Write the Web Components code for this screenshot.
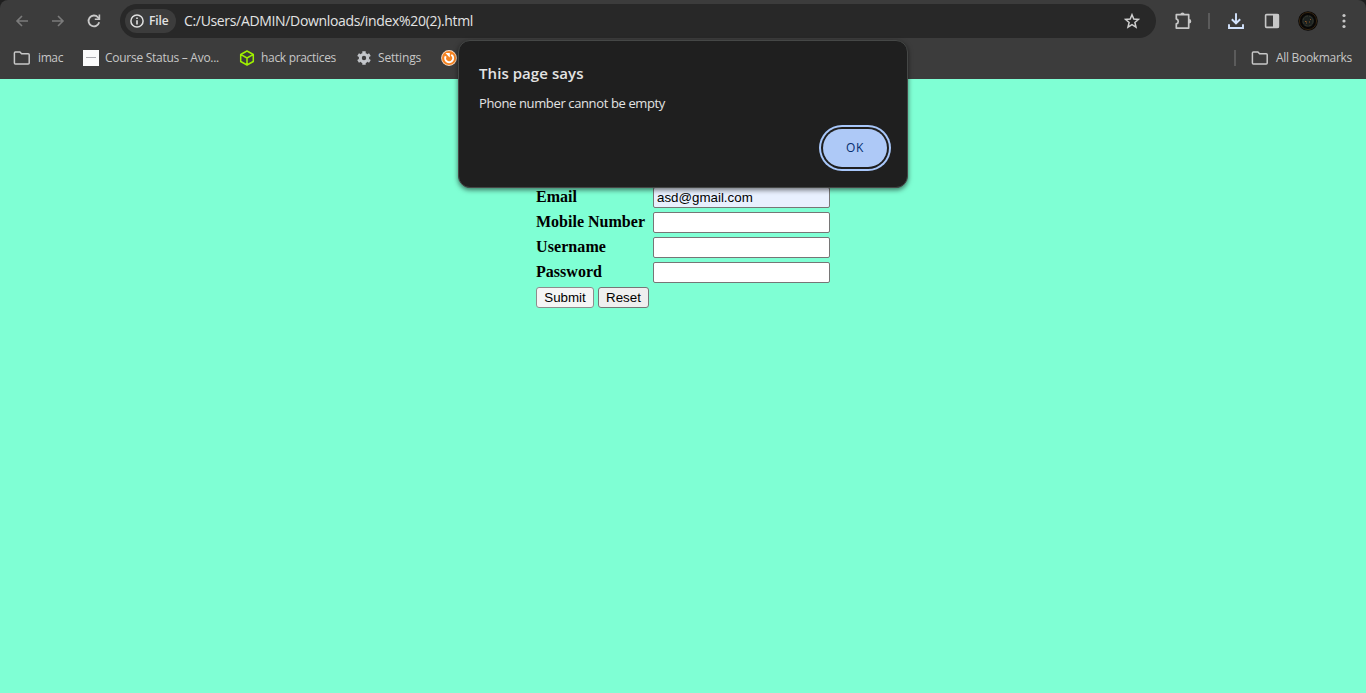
<!DOCTYPE html>
<html lang="en">
<head>
<meta charset="utf-8">
<title>Registration</title>
<style>
html,body{margin:0;height:100%;overflow:hidden;background:#7fffd4}
</style>
</head>
<body>
<browser-window></browser-window>
<script>
const define = (name, html, ready) => {
  const t = document.createElement('template');
  t.innerHTML = html;
  customElements.define(name, class extends HTMLElement {
    connectedCallback() {
      if (this.shadowRoot) return;
      this.attachShadow({ mode: 'open' }).appendChild(t.content.cloneNode(true));
      if (ready) ready(this, this.shadowRoot);
    }
  });
};

// A single line of text tracked so that it fills the width given in "w".
define('fit-text', `<style>:host{display:block;white-space:nowrap;flex:none}span{display:inline-block}</style><span><slot></slot></span>`, (el, root) => {
  const s = root.querySelector('span'), w = +el.getAttribute('w');
  el.style.width = w + 'px';
  s.style.letterSpacing = ((w - s.getBoundingClientRect().width) / el.textContent.length) + 'px';
});

const icons = {
  back: ['0 0 16 16', '<path d="M14 8H3M8 3 3 8l5 5" stroke="#7b7b7b" stroke-width="1.6"/>'],
  forward: ['0 0 16 16', '<path d="M2 8h11M8 3l5 5-5 5" stroke="#7b7b7b" stroke-width="1.6"/>'],
  reload: ['0 0 16 16', '<path d="M13.200 9.300A5.400 5.400 0 1 1 12 4.300L13.500 6" stroke="#c9c9c9" stroke-width="1.8"/><path d="M14.200 1.600v5.400H8.800V5.500h3.800V1.600z" fill="#c9c9c9"/>'],
  info: ['0 0 16 16', '<circle cx="8" cy="8" r="6.100" stroke="#e0e0e0" stroke-width="1.500"/><path d="M8 7.200v4.200M8 4.500v1.600" stroke="#e0e0e0" stroke-width="1.600"/>'],
  star: ['0 0 16 16', '<path d="M8 1.700 9.800 6l4.700.4-3.600 3.100 1.100 4.600L8 11.700l-4 2.400 1.100-4.600-3.600-3.100L6.200 6z" stroke="#cfcfcf" stroke-width="1.500"/>'],
  puzzle: ['0 0 18 18', '<path d="M2.300 2.700h12.400v13.400H2.300v-4.200c2.600-.8 2.600-4.200 0-5z" stroke="#c7c7c7" stroke-width="1.700" stroke-linejoin="round"/><path d="M6.400 2.500a2.100 2.100 0 0 1 4.200 0zM15 7a2.300 2.300 0 0 1 0 4.600z" fill="#c7c7c7"/>'],
  download: ['0 0 16 16', '<path d="M8 .3v9.700M3.800 6.200 8 10.300l4.200-4.100M1 11.300V15h14v-3.700" stroke="#d3e3fd" stroke-width="1.900"/>'],
  panel: ['0 0 16 16', '<rect x="1.600" y="1.600" width="12.800" height="12.800" rx="1" stroke="#c7c7c7" stroke-width="1.600"/><path d="M9 1h5.600v14H9z" fill="#c7c7c7"/>'],
  avatar: ['0 0 20 20', '<circle cx="10" cy="10" r="9.800" fill="#080706"/><circle cx="10" cy="10" r="8.600" stroke="#33230f"/><circle cx="10" cy="10" r="6" fill="#1c211f"/><circle cx="10" cy="10" r="5" stroke="#35382f" stroke-dasharray="3 1"/><path d="M7 10.500h1.500M8 12h1m3-3.500h1M11 11h1" stroke="#8a5524"/>'],
  dots: ['0 0 16 16', '<g fill="#c7c7c7"><circle cx="8" cy="2.500" r="1.600"/><circle cx="8" cy="8" r="1.600"/><circle cx="8" cy="13.500" r="1.600"/></g>'],
  folder: ['0 0 18 16', '<path d="M1.400 3q0-1 1-1h4.500l1.700 1.800h6.600q1 0 1 1V13q0 1-1 1H2.400q-1 0-1-1z" stroke="#c7c7c7" stroke-width="1.500"/>'],
  course: ['0 0 16 16', '<path d="M0 0h16v16H0z" fill="#fafafa"/><path d="M3 7.500h10" stroke="#a9a9ae"/>'],
  cube: ['0 0 16 16', '<path d="M8 1 14.300 4.500v7L8 15l-6.300-3.500v-7zM2 4.700 8 8l6-3.300M8 8v7" stroke="#9fef00" stroke-width="1.500" stroke-linejoin="round"/>'],
  gear: ['0 0 16 16', '<circle cx="8" cy="8" r="3.700" stroke="#c3c6ca" stroke-width="3"/><g stroke="#c3c6ca" stroke-width="3.400"><path d="M8 1.200v2M8 12.800v2M2.100 4.600l1.700 1M12.200 10.400l1.700 1M2.100 11.400l1.700-1M12.200 5.600l1.700-1"/></g>'],
  orange: ['0 0 16 16', '<circle cx="8" cy="8" r="7.900" fill="#f8dcc4"/><circle cx="8" cy="8" r="7" fill="#f58220"/><path d="M10.300 4.800A4 4 0 1 1 4.700 6.200" stroke="#fff" stroke-width="2"/><path d="M4.500 3h4.300v4.600L7.200 6z" fill="#fff"/>']
};
customElements.define('ui-icon', class extends HTMLElement {
  connectedCallback() {
    if (this.shadowRoot) return;
    const [box, body] = icons[this.getAttribute('name')];
    const [, , w, h] = box.split(' ');
    this.attachShadow({ mode: 'open' }).innerHTML =
      `<style>:host{display:block;flex:none;width:${w}px;height:${h}px}svg{display:block}</style><svg width="${w}" height="${h}" viewBox="${box}" fill="none">${body}</svg>`;
  }
});

define('tool-bar', `<style>
:host{display:flex;align-items:center;height:42px;box-sizing:border-box;padding:0 14px;font:14px/20px "Open Sans",sans-serif;color:#e3e3e3}
.nav{display:flex;gap:20px;width:106px}
.omni{display:flex;align-items:center;flex:none;width:1036px;height:34px;border-radius:17px;background:#282828;box-sizing:border-box;padding:0 16px 0 5px}
.chip{display:flex;align-items:center;gap:4px;width:51px;height:24px;border-radius:12px;background:#3c3c3c;box-sizing:border-box;padding-left:4px;font-size:12px;font-weight:600;margin-right:8px}
.omni ui-icon[name=star]{margin-left:auto}
.tools{display:flex;align-items:center;flex:1;padding-left:18px}
.sep{width:2px;height:16px;background:#5b5b5b;margin:0 18px 0 16px}
ui-icon[name=download]{margin-right:20px}ui-icon[name=panel]{margin-right:18px}
ui-icon[name=avatar]{margin-right:18px}
</style>
<div class="nav"><ui-icon name="back"></ui-icon><ui-icon name="forward"></ui-icon><ui-icon name="reload"></ui-icon></div>
<div class="omni"><div class="chip"><ui-icon name="info"></ui-icon><fit-text w="19.5">File</fit-text></div><fit-text w="289">C:/Users/ADMIN/Downloads/index%20(2).html</fit-text><ui-icon name="star"></ui-icon></div>
<div class="tools"><ui-icon name="puzzle"></ui-icon><div class="sep"></div><ui-icon name="download"></ui-icon><ui-icon name="panel"></ui-icon><ui-icon name="avatar"></ui-icon><ui-icon name="dots"></ui-icon></div>`);

customElements.define('bookmark-item', class extends HTMLElement {
  connectedCallback() {
    if (this.shadowRoot) return;
    this.attachShadow({ mode: 'open' }).innerHTML =
      `<style>:host{display:flex;align-items:center;flex:none;gap:6px}</style><ui-icon name="${this.getAttribute('icon')}"></ui-icon><slot></slot>`;
  }
});

define('bookmark-bar', `<style>
:host{display:flex;align-items:center;height:32px;box-sizing:border-box;padding:0 14px 0 13px;font:12px/18px "Open Sans",sans-serif;color:#c7c7c7}
.list{display:flex;gap:20px}
.folder{gap:7px}
.sep{width:2px;height:16px;background:#5b5b5b;margin:0 15px 0 auto}
</style>
<div class="list">
<bookmark-item class="folder" icon="folder"><fit-text w="25">imac</fit-text></bookmark-item>
<bookmark-item icon="course"><fit-text w="114">Course Status – Avo...</fit-text></bookmark-item>
<bookmark-item icon="cube"><fit-text w="75">hack practices</fit-text></bookmark-item>
<bookmark-item icon="gear"><fit-text w="43">Settings</fit-text></bookmark-item>
<bookmark-item icon="orange"></bookmark-item>
</div>
<div class="sep"></div><bookmark-item class="folder" icon="folder"><fit-text w="76">All Bookmarks</fit-text></bookmark-item>`);

define('form-row', `<style>
:host{display:grid;grid-template-columns:117px 177px;align-items:center;height:21px;font:bold 16px/18px "Liberation Serif",serif;color:#000}
::slotted(fit-text){padding-bottom:2px}
input{font:13.333px "Liberation Sans",sans-serif;box-sizing:border-box;width:177px;height:21px;margin:0;padding:1px 3px;border:1px solid #767676;border-radius:2px;background:#fff;color:#000;outline:0}
</style><slot></slot><input>`, (el, root) => {
  const v = el.getAttribute('value');
  if (v) { const i = root.querySelector('input'); i.value = v; i.style.background = '#e8f0fe'; }
});

define('sign-form', `<style>
:host{display:flex;flex-direction:column;gap:4px;width:294px;margin:0 auto;padding-top:108px}
.actions{display:flex;gap:4px}
button{font:13.333px "Liberation Sans",sans-serif;box-sizing:border-box;height:21px;padding:0;border:1px solid #767676;border-radius:3px;background:#efefef;color:#000}
.s{width:58px;border-color:#8d8d8d;background:#f5f5f5}.r{width:51px}
</style>
<form-row value="asd@gmail.com"><fit-text w="41">Email</fit-text></form-row>
<form-row><fit-text w="109">Mobile Number</fit-text></form-row>
<form-row><fit-text w="70">Username</fit-text></form-row>
<form-row><fit-text w="66">Password</fit-text></form-row>
<div class="actions"><button class="s">Submit</button><button class="r">Reset</button></div>`);

define('alert-dialog', `<style>
:host{position:absolute;left:458px;top:40px;width:450px;height:148px;box-sizing:border-box;display:flex;flex-direction:column;padding:21px 20px 20px;border:1px solid #454746;border-radius:12px;background:#1f1f1f;color:#e3e3e3;box-shadow:0 2px 5px #0008;font:13px/20px "Open Sans",sans-serif}
.title{font-size:15px;font-weight:600;line-height:22px;margin-bottom:9px}
button{display:flex;align-items:center;justify-content:center;margin:auto 0 0 auto;width:64px;height:38px;flex:none;border:0;border-radius:19px;padding:0;background:#aec9f7;color:#062e6f;font:500 12px/18px "Open Sans",sans-serif;box-shadow:0 0 0 2px #1f1f1f,0 0 0 4px #a8c7fa}
</style>
<fit-text class="title" w="104.5">This page says</fit-text><fit-text w="186">Phone number cannot be empty</fit-text><button><fit-text w="18">OK</fit-text></button>`);

define('browser-window', `<style>
:host{display:block;width:1366px;height:693px;position:relative;overflow:hidden;background:#7fffd4}
header{height:79px;background:#3c3c3c;border-radius:8px 8px 0 0}
.frame{background:#1f1f1f;height:79px}
</style>
<div class="frame"><header><tool-bar></tool-bar><bookmark-bar></bookmark-bar></header></div>
<sign-form></sign-form><alert-dialog></alert-dialog>`);
</script>
</body>
</html>
